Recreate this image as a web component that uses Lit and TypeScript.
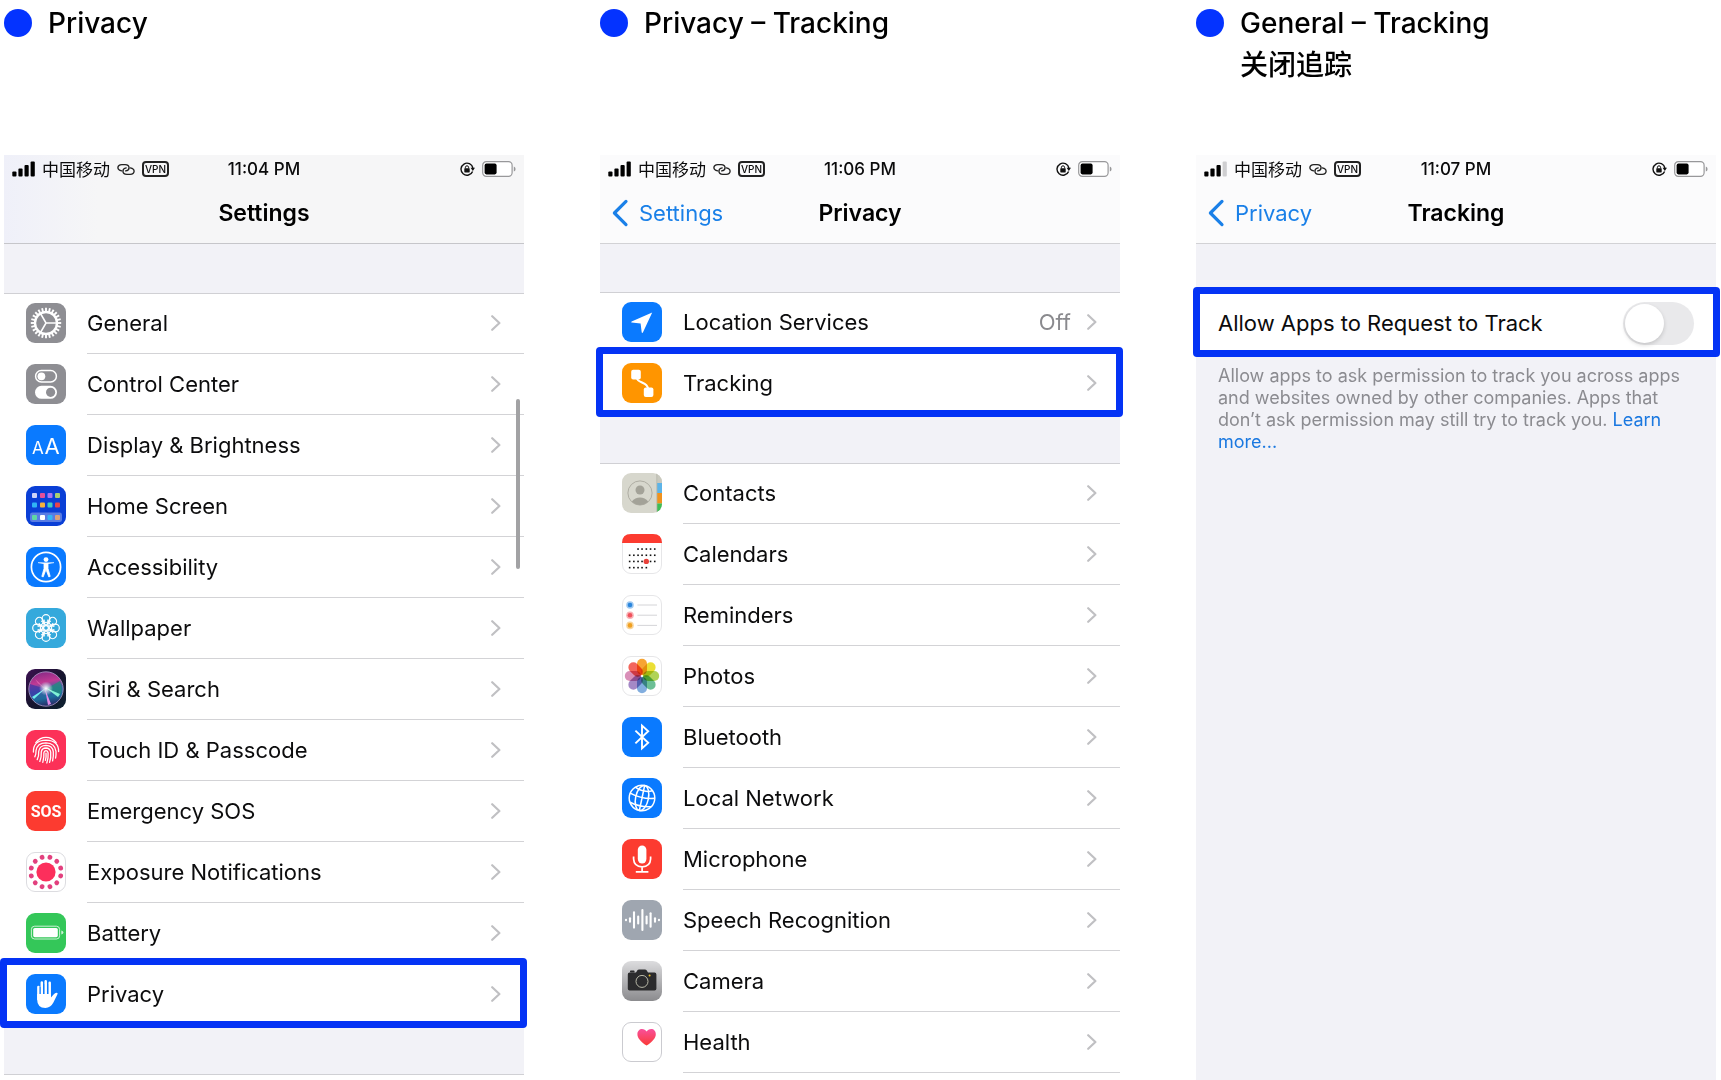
import { LitElement, html, svg, css, nothing, type SVGTemplateResult, type TemplateResult } from "lit";
import { customElement, property } from "lit/decorators.js";
import { classMap } from "lit/directives/class-map.js";

interface Item {
  icon: string;
  label: string;
  value?: string;
  marked?: boolean;
}

const turns = (n: number, start = 0): number[] =>
  Array.from({ length: n }, (_, i) => start + (360 / n) * i);

const tile = (fill: string) => svg`<rect width="40" height="40" rx="9" fill=${fill}></rect>`;
const paleTile = (edge = "#e6e6e8") =>
  svg`<rect x=".5" y=".5" width="39" height="39" rx="8.5" fill="#fff" stroke=${edge}></rect>`;

const homeCells: Array<[number, number, string]> = [
  [6, 7, "#cfd4f7"], [14, 7, "#e4509a"], [21.5, 7, "#a874f5"], [29, 7, "#a9cf72"],
  [6, 16.5, "#2fb4f5"], [14, 16.5, "#f6b13c"], [21.5, 16.5, "#3fcdc0"], [29, 16.5, "#e6454a"],
  [6, 29, "#5fd7a4"], [14, 29, "#ffffff"], [21.5, 29, "#35b6f2"], [29, 29, "#dda077"],
];

const petals = ["#f79a1c", "#e9dc1f", "#a8cf45", "#5cb88a", "#74a5dc", "#9a7cc0", "#d583b0", "#f2554a"];

const calendarRows: Array<[number, number[]]> = [
  [15, [16, 20, 24.3, 28.5, 32.7]],
  [21.2, [7.6, 11.8, 16, 20, 24.3, 28.5, 32.7]],
  [27.4, [7.6, 11.8, 16, 20, 28.5, 32.7]],
  [33.6, [7.6, 11.8, 16, 20, 24.3]],
];

const speechBars: Array<[number, number]> = [
  [4, 0.3], [8, 1.8], [12, 7.6], [16.2, 3.4], [20.4, 10], [24.6, 3.4], [28.6, 6.8], [33, 1.8], [37, 0.3],
];

const icons: Record<string, SVGTemplateResult> = {
  general: svg`${tile("#8e8e93")}
    <g fill="none" stroke="#fff">
      <circle cx="20" cy="20" r="11" stroke-width="2.4"></circle>
      ${turns(24).map((a) => svg`<path d="M20 4.8V8.6" stroke-width="1.9" transform="rotate(${a} 20 20)"></path>`)}
      <path d="M20 20H31M20 20L14.5 10.5M20 20L14.5 29.5" stroke-width="1.5"></path>
    </g>`,
  control: svg`${tile("#8e8e93")}
    <rect x="9.6" y="6.6" width="20.8" height="11.4" rx="5.7" fill="none" stroke="#fff" stroke-width="1.5"></rect>
    <circle cx="15.4" cy="12.3" r="3.9" fill="#fff"></circle>
    <rect x="9" y="21.8" width="22" height="13" rx="6.5" fill="#fff"></rect>
    <circle cx="24.6" cy="28.3" r="4.6" fill="#8e8e93"></circle>`,
  display: svg`${tile("#0a7aff")}
    <text x="6" y="28.5" fill="#fff" font-family="Inter, sans-serif" font-size="17">A</text>
    <text x="18.4" y="28.5" fill="#fff" font-family="Inter, sans-serif" font-size="22">A</text>`,
  home: svg`${tile("#0a3fd6")}
    <rect x="4" y="26.5" width="32" height="9.6" rx="2.4" fill="#fff" opacity=".32"></rect>
    ${homeCells.map(([x, y, c]) => svg`<rect x=${x} y=${y} width="5" height="5" rx="1" fill=${c}></rect>`)}`,
  accessibility: svg`${tile("#0a7aff")}
    <circle cx="20" cy="20" r="14.6" fill="none" stroke="#fff" stroke-width="1.7"></circle>
    <circle cx="20" cy="12.6" r="2.4" fill="#fff"></circle>
    <path d="M12 15.6L18 16.6V21.5L15.8 29.4L17.2 29.9L20 22.6L22.8 29.9L24.2 29.4L22 21.5V16.6L28 15.6" fill="#fff" stroke="#fff" stroke-width=".8" stroke-linejoin="round"></path>`,
  wallpaper: svg`${tile("#35a9dc")}
    <g fill="none" stroke="#fff" stroke-width="1.2">
      ${turns(8).map((a) => svg`<g transform="rotate(${a} 20 20)">
        <circle cx="20" cy="10.6" r="3.9"></circle>
        <path d="M20 17.4C18 15.6 17.6 13.6 18.4 11.6M20 17.4C22 15.6 22.4 13.6 21.6 11.6"></path>
      </g>`)}
      <circle cx="20" cy="20" r="2.4"></circle>
    </g>`,
  siri: svg`
    <defs>
      <linearGradient id="siri-back" x1="0" y1="0" x2="1" y2="1">
        <stop offset="0" stop-color="#3c1152"></stop><stop offset=".5" stop-color="#17142e"></stop><stop offset="1" stop-color="#0c2230"></stop>
      </linearGradient>
      <linearGradient id="siri-orb" x1=".4" y1="0" x2=".6" y2="1">
        <stop offset="0" stop-color="#8a2a86"></stop><stop offset=".3" stop-color="#c03a94"></stop>
        <stop offset=".52" stop-color="#3c62a8"></stop><stop offset=".75" stop-color="#1d6b9c"></stop><stop offset="1" stop-color="#2a2360"></stop>
      </linearGradient>
      <radialGradient id="siri-glow"><stop offset="0" stop-color="#fff"></stop><stop offset="1" stop-color="#fff" stop-opacity="0"></stop></radialGradient>
    </defs>
    <rect width="40" height="40" rx="9" fill="url(#siri-back)"></rect>
    <circle cx="20" cy="20" r="17.2" fill="url(#siri-orb)" stroke="#a99cc8" stroke-width=".8"></circle>
    <path d="M20 20L34 12Q38 22 33 27Z" fill="#1e8f7c" opacity=".75"></path>
    <path d="M20 20L4 15Q2 24 7 30Z" fill="#3b35a8" opacity=".7"></path>
    <path d="M20 19L6 28L8 30Z" fill="#6ff0ec"></path>
    <path d="M20 19L34 25L32 28Z" fill="#7ff2d6"></path>
    <path d="M19 20L22 36L25 35Z" fill="#e08be8"></path>
    <path d="M19 20L9 10L12 14Z" fill="#ff87c8" opacity=".8"></path>
    <circle cx="20" cy="19.5" r="7" fill="url(#siri-glow)"></circle>`,
  touch: svg`${tile("#fc3158")}
    <g fill="none" stroke="#fff" stroke-width="1.3" stroke-linecap="round">
      <path d="M9.8 12.6Q14 7.4 20 7.4T30.2 12.6"></path>
      <path d="M7.4 22Q7 10.6 20 10.2Q33 10.6 32.6 21.6"></path>
      <path d="M8.8 26.8Q10.2 24.4 10 20.6Q11.2 12.8 20 12.8Q29 13 30 21.4Q30.2 24.6 29.6 28"></path>
      <path d="M11.2 29.6Q13 26 12.7 21.4Q13.6 15.4 20 15.4Q26.4 15.6 27.3 21.6Q27.7 26.4 26.6 30.8"></path>
      <path d="M13.8 31.4Q15.6 27 15.3 22Q15.8 18 20 18Q24 18.2 24.7 22Q25.2 27.6 23.6 32.4"></path>
      <path d="M16.8 32.4Q18.2 27.4 17.9 22.6Q18.2 20.7 20 20.6Q21.8 20.7 22.1 22.8Q22.5 28 20.8 33"></path>
      <path d="M20 23.2Q20.4 27 19.4 30.4"></path>
    </g>`,
  sos: svg`${tile("#fc3b30")}
    <text x="20" y="26" fill="#fff" text-anchor="middle" font-family="'Liberation Sans Narrow', Roboto, sans-serif" font-weight="700" font-size="16">SOS</text>`,
  exposure: svg`${paleTile("#dcdce0")}
    <circle cx="20" cy="20" r="9.6" fill="#fc2f5c"></circle>
    ${turns(12, 15).map((a) => svg`<circle cx="20" cy="4.8" r="2.4" fill="#e2407e" transform="rotate(${a} 20 20)"></circle>`)}`,
  battery: svg`${tile("#34c759")}
    <rect x="5.4" y="13.2" width="28.2" height="12.8" rx="3.2" fill="none" stroke="#fff" stroke-opacity=".75"></rect>
    <rect x="7.2" y="15" width="24.6" height="9.2" rx="1.6" fill="#fff"></rect>
    <path d="M35.3 17.6Q37.4 18 37.4 19.6T35.3 21.6Z" fill="#fff" opacity=".75"></path>`,
  privacy: svg`${tile("#0a7aff")}
    <g stroke="#fff" stroke-width="2.5" stroke-linecap="round">
      <path d="M12.4 13V25M15.8 8.6V23M19.7 7.2V23M23.7 8.8V23"></path>
    </g>
    <path d="M11.15 20H24.95V23.4L27.6 20.4Q29.6 18 31.4 18.9Q32 19.4 31.2 20.8L27.4 28.6Q24.6 34 19.4 34Q11.15 34 11.15 25.6Z" fill="#fff"></path>
    <path d="M14.1 13V20M17.75 10V20M21.7 10V20" stroke="#0a7aff" stroke-width=".8"></path>`,
  location: svg`${tile("#0a7aff")}<path d="M30.2 10.6L20.9 30.6Q19.9 31.4 19.7 30.2L18.6 21.4L9.6 20.6Q8.6 20.2 9.6 19.4Z" fill="#fff"></path>`,
  tracking: svg`${tile("#ff9500")}
    <path d="M14 12C14 22 26.5 17 26.5 28" fill="none" stroke="#fff" stroke-width="2"></path>
    <rect x="9.2" y="6.8" width="9.6" height="9.6" rx="2" fill="#fff"></rect>
    <rect x="21.8" y="24.4" width="9.6" height="9.6" rx="2" fill="#fff"></rect>`,
  contacts: svg`
    <defs><clipPath id="contacts-clip"><rect width="40" height="40" rx="9"></rect></clipPath></defs>
    <g clip-path="url(#contacts-clip)">
      <rect width="40" height="40" fill="#d7d7cd"></rect>
      <rect x="35" width="5" height="10" fill="#c9c9be"></rect>
      <rect x="35" y="10" width="5" height="10" fill="#5db4e8"></rect>
      <rect x="35" y="20" width="5" height="10.5" fill="#f0921e"></rect>
      <rect x="35" y="30.5" width="5" height="10" fill="#3ebd55"></rect>
      <path d="M34.8 0V40" stroke="#b9b9ad" stroke-width=".9"></path>
    </g>
    <circle cx="18" cy="20" r="12.1" fill="none" stroke="#a9a89e" stroke-width=".9"></circle>
    <circle cx="18" cy="17" r="4.5" fill="#a3a298"></circle>
    <path d="M9.8 28.6Q13 24.6 18 24.6T26.2 28.6Q23 32 18 32T9.8 28.6Z" fill="#a3a298"></path>`,
  calendars: svg`${paleTile()}
    <path d="M0 9Q0 0 9 0H31Q40 0 40 9Z" fill="#fc3b30"></path>
    ${calendarRows.map(([y, xs]) => xs.map((x) => svg`<rect x=${x - 0.75} y=${y - 0.75} width="1.6" height="1.6" fill="#111"></rect>`))}
    <circle cx="24.3" cy="27.4" r="2.7" fill="#e8413a"></circle>`,
  reminders: svg`${paleTile()}
    ${(
      [
        [10, "#2a86dd"],
        [20.2, "#f0515c"],
        [30.4, "#f0a021"],
      ] as Array<[number, string]>
    ).map(([y, c]) => svg`
      <circle cx="8" cy=${y} r="3.8" fill=${c} opacity=".45"></circle>
      <circle cx="8" cy=${y} r="2.3" fill=${c}></circle>
      <path d="M15.4 ${y}H35" stroke="#cfcfd2" stroke-width=".9"></path>`)}`,
  photos: svg`${paleTile()}
    ${petals.map((c, i) => svg`<rect x="15" y="2.8" width="10" height="16.2" rx="5" fill=${c} opacity=".9" style="mix-blend-mode:multiply" transform="rotate(${i * 45} 20 20)"></rect>`)}`,
  bluetooth: svg`${tile("#0a7aff")}<path d="M13.4 13.6L26.2 25.8L20 31.4V8.6L26.2 14.2L13.4 26.4" fill="none" stroke="#fff" stroke-width="1.9" stroke-linejoin="miter"></path>`,
  network: svg`${tile("#0a7aff")}
    <g fill="none" stroke="#fff" stroke-width="1.5" transform="rotate(12 20 20)">
      <circle cx="20" cy="20" r="12.8"></circle>
      <ellipse cx="20" cy="20" rx="6.4" ry="12.8"></ellipse>
      <path d="M20 7.2V32.8M7.4 17.6Q20 21.4 32.6 17.6M9.2 26.6Q20 29.6 30.8 26.6M11.2 10.8Q20 14.8 28.8 10.8"></path>
    </g>`,
  microphone: svg`${tile("#fc3b30")}
    <rect x="15.8" y="6.4" width="8.6" height="18" rx="4.3" fill="#fff"></rect>
    <path d="M11.6 17.4V20Q12 27.6 20.1 27.8Q28.2 27.6 28.6 20V17.4M20.1 27.8V32.6M13.8 32.8H26.4" fill="none" stroke="#fff" stroke-width="1.7"></path>`,
  speech: svg`${tile("#9fa6b0")}
    ${speechBars.map(([x, h]) => svg`<path d="M${x} ${20 - h}V${20 + h}" stroke="#fff" stroke-width="2.1" stroke-linecap="round"></path>`)}`,
  camera: svg`
    <defs><linearGradient id="camera-back" x1="0" y1="0" x2="0" y2="1"><stop offset="0" stop-color="#dcdcde"></stop><stop offset="1" stop-color="#8b8b8e"></stop></linearGradient></defs>
    <rect width="40" height="40" rx="9" fill="url(#camera-back)"></rect>
    <rect x="8" y="9.6" width="4.6" height="2" rx=".8" fill="#2b2b2d"></rect>
    <path d="M7.6 11.6H14L15.6 9Q16 8.4 17 8.4H23Q24 8.4 24.4 9L26 11.6H32.6Q34.4 11.6 34.4 13.4V27.8Q34.4 29.6 32.6 29.6H7.6Q5.8 29.6 5.8 27.8V13.4Q5.8 11.6 7.6 11.6Z" fill="#2b2b2d"></path>
    <circle cx="20" cy="20.4" r="6" fill="none" stroke="#b9b9a8" stroke-width="1"></circle>
    <circle cx="27.6" cy="14.4" r="1" fill="#f0c52a"></circle>`,
  health: svg`
    <defs><linearGradient id="heart" x1="0" y1="0" x2="0" y2="1"><stop offset="0" stop-color="#f8509c"></stop><stop offset="1" stop-color="#fa3a34"></stop></linearGradient></defs>
    ${paleTile("#cbcbd0")}
    <path d="M24.6 23.6C18.6 19.6 15.4 16 15.4 12.2C15.4 9 17.6 7 20 7C22 7 23.6 8 24.6 9.6C25.6 8 27.2 7 29.2 7C31.8 7 33.8 9 33.8 12.2C33.8 16 30.6 19.6 24.6 23.6Z" fill="url(#heart)"></path>`,
};

const chevron = html`<svg class="chevron" viewBox="0 0 10 16" aria-hidden="true">
  <path d="M1.2 1.2L8.4 8L1.2 14.8" fill="none" stroke="#c0c0c3" stroke-width="2.2" stroke-linecap="round" stroke-linejoin="round"></path>
</svg>`;

@customElement("status-bar")
export class StatusBar extends LitElement {
  @property() time = "";
  @property({ type: Number }) bars = 4;

  static styles = css`
    :host {
      display: grid;
      grid-template-columns: 1fr auto 1fr;
      align-items: center;
      height: 28px;
      padding: 0 8px;
      font: 500 17px/20px Inter, "Noto Sans CJK SC", sans-serif;
      color: #0b0b0c;
    }
    .left, .right { display: flex; align-items: center; gap: 7px; }
    .right { justify-content: flex-end; }
    .carrier { font: 400 17px/20px "Noto Sans CJK SC", sans-serif; }
    .signal { width: 23px; height: 16px; }
    .link { width: 18px; height: 13px; }
    .vpn {
      border: 2px solid #222;
      border-radius: 4px;
      padding: 0 1px;
      font: 500 10px/12px Inter, sans-serif;
    }
    .lock { width: 15px; height: 14px; }
    .battery { width: 34px; height: 16px; }
  `;

  render() {
    return html`
      <div class="left">
        <svg class="signal" viewBox="0 0 23 16" aria-hidden="true">
          ${[5, 8, 11.5, 15].map((h, i) => svg`<rect x=${0.3 + i * 6.1} y=${15.5 - h} width="4.2" height=${h} rx="1" fill=${i < this.bars ? "#000" : "#cfcfd1"}></rect>`)}
        </svg>
        <span class="carrier">中国移动</span>
        <svg class="link" viewBox="0 0 20 14" aria-hidden="true">
          <g fill="none" stroke="#222" stroke-width="1.5" stroke-linecap="round">
            <path d="M5.2 8.6Q1 7.8 1 4.9Q1.2 1.6 5.4 1.5H9Q13.4 1.7 13.4 5.2Q13.2 8.2 9.6 8.6"></path>
            <path d="M14.8 5.2Q19 6 19 8.9Q18.8 12.3 14.6 12.4H11Q6.6 12.2 6.6 8.6Q6.8 5.8 10.2 5.2"></path>
          </g>
        </svg>
        <span class="vpn">VPN</span>
      </div>
      <time>${this.time}</time>
      <div class="right">
        <svg class="lock" viewBox="0 0 15 14" aria-hidden="true">
          <path d="M12.6 9.4A6 6 0 1 1 12.9 6" fill="none" stroke="#111" stroke-width="1.4"></path>
          <path d="M10.6 5.8H15L12.8 9Z" fill="#111"></path>
          <rect x="4.3" y="6.2" width="5.4" height="4.2" rx=".6" fill="#111"></rect>
          <path d="M5.4 6.4V5.2Q5.6 3.8 7 3.8T8.6 5.2V6.4" fill="none" stroke="#111"></path>
        </svg>
        <svg class="battery" viewBox="0 0 34 16" aria-hidden="true">
          <rect x=".7" y=".7" width="29.4" height="14.6" rx="3.6" fill="#fff" stroke="#98989a" stroke-width="1.2"></rect>
          <rect x="2.6" y="2.6" width="12" height="10.8" rx="1.8" fill="#000"></rect>
          <path d="M31.8 5.4Q33.6 6 33.6 8T31.8 10.6Z" fill="#98989a"></path>
        </svg>
      </div>
    `;
  }
}

@customElement("phone-header")
export class PhoneHeader extends LitElement {
  @property() heading = "";
  @property() back = "";
  @property() time = "";
  @property({ type: Number }) bars = 4;
  @property({ type: Boolean, reflect: true }) tinted = false;

  static styles = css`
    :host {
      display: block;
      background: #fbfbfc;
      border-bottom: 1px solid #d2d2d5;
      font-family: Inter, sans-serif;
    }
    :host([tinted]) {
      background: linear-gradient(90deg, #eff0f9, #f6f6f7 18%);
      border-color: #c6c6ca;
    }
    .nav {
      display: grid;
      grid-template-columns: 1fr auto 1fr;
      align-items: center;
      height: 60px;
      padding: 0 12px;
    }
    h2 { margin: 0; grid-column: 2; font-size: 23px; line-height: 28px; font-weight: 600; color: #000; }
    a {
      display: flex;
      align-items: center;
      gap: 10px;
      font-size: 22px;
      line-height: 28px;
      color: #1a80e8;
      text-decoration: none;
    }
    svg { width: 17px; height: 28px; }
  `;

  render() {
    return html`
      <status-bar .time=${this.time} .bars=${this.bars}></status-bar>
      <div class="nav">
        ${this.back
          ? html`<a href="#back"><svg viewBox="0 0 17 28" aria-hidden="true"><path d="M14 2.4L2.4 14L14 25.6" fill="none" stroke="#1a80e8" stroke-width="3.2" stroke-linecap="round" stroke-linejoin="round"></path></svg>${this.back}</a>`
          : nothing}
        <h2>${this.heading}</h2>
      </div>
    `;
  }
}

@customElement("settings-list")
export class SettingsList extends LitElement {
  @property({ attribute: false }) items: Item[] = [];

  static styles = css`
    :host { display: block; background: #fff; box-shadow: inset 0 1px #d0d0d4; }
    ul { margin: 0; padding: 0; list-style: none; }
    .row {
      position: relative;
      display: flex;
      align-items: stretch;
      gap: 21px;
      height: 61px;
      padding-left: 22px;
      color: #0c0c0d;
      text-decoration: none;
      font: 400 22px/28px Inter, sans-serif;
    }
    .icon { flex: none; width: 40px; height: 40px; margin-top: 10px; }
    .body {
      flex: 1;
      display: flex;
      align-items: center;
      gap: 16px;
      padding-right: 23px;
      border-bottom: 1px solid #d3d3d6;
    }
    .label { flex: 1; }
    .value { color: #8a8a8e; }
    .chevron { width: 10px; height: 16px; }
    .marked { z-index: 1; }
    .marked .body { border-color: transparent; }
    .marked::after {
      content: "";
      position: absolute;
      inset: -6px -3px -3px -4px;
      border: 7px solid #0433f5;
      border-radius: 4px;
    }
  `;

  render(): TemplateResult {
    return html`<ul>
      ${this.items.map((item) => html`<li>
        <a class=${classMap({ row: true, marked: !!item.marked })} href="#${item.icon}">
          <svg class="icon" viewBox="0 0 40 40" aria-hidden="true">${icons[item.icon]}</svg>
          <span class="body">
            <span class="label">${item.label}</span>
            ${item.value ? html`<span class="value">${item.value}</span>` : nothing}
            ${chevron}
          </span>
        </a>
      </li>`)}
    </ul>`;
  }
}

@customElement("app-root")
export class AppRoot extends LitElement {
  static styles = css`
    :host {
      display: block;
      background: #fff;
      font-family: Inter, "Noto Sans CJK SC", sans-serif;
      color: #0b0b0c;
    }
    .board {
      display: grid;
      grid-template-columns: repeat(3, minmax(0, 1fr));
      column-gap: 76px;
      min-height: 100vh;
      padding: 0 5px 0 4px;
      box-sizing: border-box;
    }
    .step { display: flex; flex-direction: column; }
    .caption { display: flex; gap: 16px; height: 155px; }
    .dot { flex: none; width: 28px; height: 28px; margin-top: 9px; border-radius: 50%; background: #0433ff; }
    h1 { margin: 2px 0 0; font-size: 28px; line-height: 42px; font-weight: 500; color: #000; }
    .phone { position: relative; flex: 1; display: flex; flex-direction: column; background: #fff; }
    .grey { background: #f2f2f7; }
    .gap { height: 49px; background: #f2f2f7; }
    .short { height: 48px; }
    .next { flex: 1; border-top: 1px solid #d0d0d4; }
    .scroll {
      position: absolute;
      top: 244px;
      right: 4px;
      width: 4px;
      height: 170px;
      border-radius: 2px;
      background: #a2a2a4;
    }
    .option {
      position: relative;
      display: flex;
      align-items: center;
      justify-content: space-between;
      height: 60px;
      padding: 0 22px 1px;
      background: #fff;
      font-size: 22px;
      line-height: 28px;
    }
    .option::after {
      content: "";
      position: absolute;
      inset: -6px -4px -3px -3px;
      border: 7px solid #0433f5;
      border-radius: 4px;
      pointer-events: none;
    }
    .switch {
      appearance: none;
      display: flex;
      width: 71px;
      height: 43px;
      margin: 0;
      padding: 2px;
      box-sizing: border-box;
      border-radius: 22px;
      background: #e9e9eb;
    }
    .switch::before {
      content: "";
      width: 39px;
      height: 39px;
      border-radius: 50%;
      background: #fff;
      box-shadow: 0 2px 4px rgba(0, 0, 0, 0.16);
    }
    .switch:checked { justify-content: flex-end; background: #34c759; }
    .note {
      margin: 0;
      padding: 11px 24px 0 22px;
      font-size: 18px;
      line-height: 22px;
      color: #8b8b90;
    }
    .note a { color: #1a78e0; text-decoration: none; }
  `;

  private settings: Item[] = [
    { icon: "general", label: "General" },
    { icon: "control", label: "Control Center" },
    { icon: "display", label: "Display & Brightness" },
    { icon: "home", label: "Home Screen" },
    { icon: "accessibility", label: "Accessibility" },
    { icon: "wallpaper", label: "Wallpaper" },
    { icon: "siri", label: "Siri & Search" },
    { icon: "touch", label: "Touch ID & Passcode" },
    { icon: "sos", label: "Emergency SOS" },
    { icon: "exposure", label: "Exposure Notifications" },
    { icon: "battery", label: "Battery" },
    { icon: "privacy", label: "Privacy", marked: true },
  ];

  private services: Item[] = [
    { icon: "location", label: "Location Services", value: "Off" },
    { icon: "tracking", label: "Tracking", marked: true },
  ];

  private apps: Item[] = [
    { icon: "contacts", label: "Contacts" },
    { icon: "calendars", label: "Calendars" },
    { icon: "reminders", label: "Reminders" },
    { icon: "photos", label: "Photos" },
    { icon: "bluetooth", label: "Bluetooth" },
    { icon: "network", label: "Local Network" },
    { icon: "microphone", label: "Microphone" },
    { icon: "speech", label: "Speech Recognition" },
    { icon: "camera", label: "Camera" },
    { icon: "health", label: "Health" },
  ];

  render() {
    return html`<main class="board">
      <section class="step">
        <header class="caption"><span class="dot"></span><h1>Privacy</h1></header>
        <div class="phone">
          <phone-header tinted heading="Settings" time="11:04 PM"></phone-header>
          <div class="gap"></div>
          <settings-list .items=${this.settings}></settings-list>
          <div class="gap"></div>
          <div class="next"></div>
          <div class="scroll"></div>
        </div>
      </section>
      <section class="step">
        <header class="caption"><span class="dot"></span><h1>Privacy – Tracking</h1></header>
        <div class="phone">
          <phone-header heading="Privacy" back="Settings" time="11:06 PM"></phone-header>
          <div class="gap short"></div>
          <settings-list .items=${this.services}></settings-list>
          <div class="gap"></div>
          <settings-list .items=${this.apps}></settings-list>
        </div>
      </section>
      <section class="step">
        <header class="caption"><span class="dot"></span><h1>General – Tracking<br />关闭追踪</h1></header>
        <div class="phone grey">
          <phone-header heading="Tracking" back="Privacy" time="11:07 PM" bars="3"></phone-header>
          <div class="gap"></div>
          <div class="option">
            <label for="allow">Allow Apps to Request to Track</label>
            <input class="switch" id="allow" type="checkbox" role="switch" />
          </div>
          <p class="note">
            Allow apps to ask permission to track you across apps and websites owned by other companies. Apps that don’t ask permission may still try to track you.
            <a href="#learn">Learn more...</a>
          </p>
        </div>
      </section>
    </main>`;
  }
}
